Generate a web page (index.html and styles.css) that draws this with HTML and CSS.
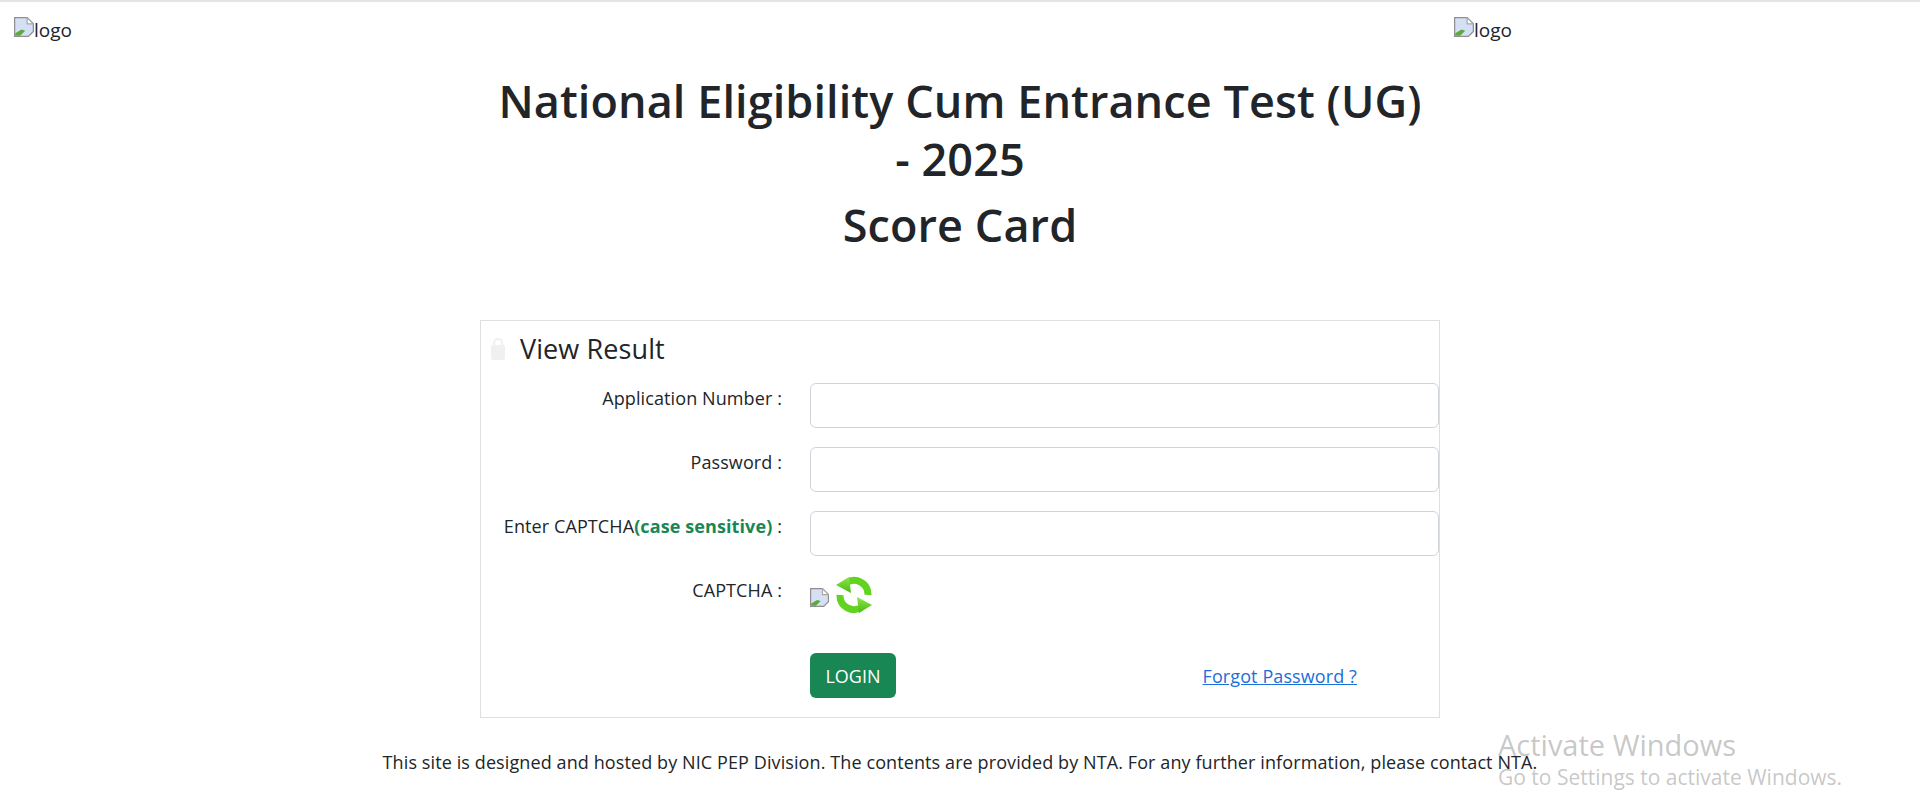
FILE: index.html
```html
<!DOCTYPE html>
<html lang="en">
<head>
    <meta charset="UTF-8">
    <meta name="viewport" content="width=device-width, initial-scale=1.0">
    <title>NEET (UG) 2025 Score Card</title>
    <link rel="stylesheet" href="styles.css">
</head>
<body>
    <header class="logos">
        <div class="logo-cell">
            <svg class="broken-img" viewBox="0 0 16 16"><path d="M.5.5h10l5 5v6l-4 4H.5z" fill="#d5e0f5" stroke="#8f8f8f"/><path d="M1 15v-2l5-3 3 1-4 4z" fill="#5fa83f"/><path d="M10.500.5v5h5z" fill="#fff" stroke="#a8a8a8"/></svg><span>logo</span>
        </div>
        <div class="logo-cell">
            <svg class="broken-img" viewBox="0 0 16 16"><path d="M.5.5h10l5 5v6l-4 4H.5z" fill="#d5e0f5" stroke="#8f8f8f"/><path d="M1 15v-2l5-3 3 1-4 4z" fill="#5fa83f"/><path d="M10.500.5v5h5z" fill="#fff" stroke="#a8a8a8"/></svg><span>logo</span>
        </div>
    </header>

    <div class="titles">
        <h1>National Eligibility Cum Entrance Test (UG)<br>- 2025</h1>
        <h1>Score Card</h1>
    </div>

    <div class="card">
        <div class="card-title">
            <svg class="lock" viewBox="0 0 16 22"><path d="M4 9V5a4 4 0 0 1 8 0v4" fill="none" stroke="#f2f2f2" stroke-width="2.500"/><rect x="1" y="7" width="14" height="15" rx="2" fill="#f0f0f0"/></svg>
            <span>View Result</span>
        </div>
        <div class="form-row">
            <label>Application Number :</label>
            <input type="text" class="field">
        </div>
        <div class="form-row">
            <label>Password :</label>
            <input type="password" class="field">
        </div>
        <div class="form-row">
            <label>Enter CAPTCHA<b class="hint">(case sensitive)</b> :</label>
            <input type="text" class="field">
        </div>
        <div class="form-row captcha-row">
            <label>CAPTCHA :</label>
            <div class="captcha">
                <svg class="broken-img small" viewBox="0 0 16 16"><path d="M.5.5h10l5 5v6l-4 4H.5z" fill="#d5e0f5" stroke="#8f8f8f"/><path d="M1 15v-2l5-3 3 1-4 4z" fill="#5fa83f"/><path d="M10.500.5v5h5z" fill="#fff" stroke="#a8a8a8"/></svg>
                <svg class="refresh" viewBox="0 0 40 38">
                    <defs>
                        <linearGradient id="leaf" x1="0" y1="0" x2="0" y2="1">
                            <stop offset="0" stop-color="#8fe64a"/>
                            <stop offset="1" stop-color="#45bd12"/>
                        </linearGradient>
                    </defs>
                    <path d="M12 7A14 14 0 0 1 34 19" fill="none" stroke="#62d321" stroke-width="7"/>
                    <path d="M2 9L15 1l2 16z" fill="url(#leaf)"/>
                    <path d="M28 31A14 14 0 0 1 6 19" fill="none" stroke="#62d321" stroke-width="7"/>
                    <path d="M38 29L25 37 23 21z" fill="url(#leaf)"/>
                </svg>
            </div>
        </div>
        <div class="form-row action-row">
            <span></span>
            <div class="actions">
                <button class="login">LOGIN</button>
                <a href="#" class="forgot">Forgot Password ?</a>
            </div>
        </div>
    </div>

    <p class="footer-note">This site is designed and hosted by NIC PEP Division. The contents are provided by NTA. For any further information, please contact NTA.</p>

    <div class="watermark">
        <div class="wm-big">Activate Windows</div>
        <div class="wm-small">Go to Settings to activate Windows.</div>
    </div>
</body>
</html>
```

FILE: styles.css
```css
* {
    box-sizing: border-box;
}
body {
    margin: 0;
    font-family: 'Open Sans', 'Noto Sans', sans-serif;
    font-size: 16px;
    color: #212529;
    background: #fff;
    border-top: 2px solid #e4e4e4;
    height: 810px;
    overflow: hidden;
    position: relative;
}
.logos {
    display: grid;
    grid-template-columns: 1440px 1fr;
    padding: 15px 14px 0;
    height: 58px;
}
.logo-cell {
    display: flex;
    align-items: flex-start;
    font-size: 19px;
    line-height: 26px;
}
.broken-img {
    width: 20px;
    height: 20px;
    margin-top: 0;
}
.titles {
    width: 960px;
    margin: 12px auto 0;
    text-align: center;
}
h1 {
    margin: 0 0 8px;
    font-size: 45px;
    font-weight: 600;
    letter-spacing: 0.08px;
    line-height: 58px;
}
.card {
    width: 960px;
    height: 398px;
    margin: 66px auto 0;
    border: 1px solid #dfdfdf;
}
.card-title {
    display: flex;
    align-items: center;
    gap: 14px;
    padding: 8px 9px 14px;
    font-size: 27px;
    letter-spacing: 0.1px;
    line-height: 40px;
}
.lock {
    width: 16px;
    height: 22px;
}
.form-row {
    display: grid;
    grid-template-columns: 301px 1fr;
    column-gap: 28px;
    margin-bottom: 19px;
}
.form-row label {
    text-align: right;
    font-size: 18px;
    letter-spacing: 0.1px;
    line-height: 30px;
}
.hint {
    color: #198754;
}
.field {
    display: block;
    width: 100%;
    height: 45px;
    border: 1px solid #ced4da;
    border-radius: 6px;
}
.captcha {
    display: flex;
    align-items: center;
    gap: 5px;
    height: 40px;
}
.broken-img.small {
    width: 19px;
    height: 19px;
    margin-top: 4px;
}
.refresh {
    width: 40px;
    height: 38px;
}
.actions {
    display: flex;
    align-items: center;
    justify-content: space-between;
    padding-right: 82px;
    margin-top: 19px;
}
.login {
    width: 86px;
    height: 45px;
    background: #198754;
    color: #fff;
    border: none;
    border-radius: 6px;
    font-family: inherit;
    font-size: 18px;
}
.forgot {
    color: #1a6fd8;
    font-size: 18px;
    letter-spacing: 0.1px;
}
.footer-note {
    margin: 31px 0 0;
    text-align: center;
    font-size: 18px;
    letter-spacing: 0.1px;
    line-height: 26px;
}
.watermark {
    position: absolute;
    left: 1498px;
    top: 725px;
    color: rgba(120, 120, 120, 0.42);
}
.wm-big {
    font-size: 29px;
    line-height: 36px;
}
.wm-small {
    font-size: 21px;
    line-height: 28px;
}
```
